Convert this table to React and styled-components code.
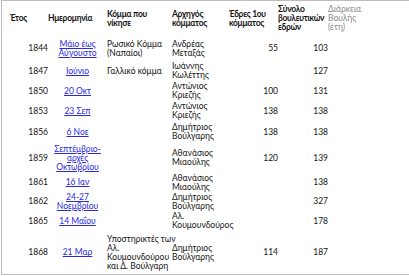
import React from "react";
import styled, { createGlobalStyle } from "styled-components";

const Global = createGlobalStyle`
  html, body { margin: 0; padding: 0; background: #fff; }
  body { font-family: Lato, "Noto Sans", sans-serif; color: #151515; }
`;

const Frame = styled.div`
  margin-left: 1px;
  width: 420px;
  border-top: 1px solid #bdbdbd;
  border-left: 1px solid #bdbdbd;
  border-bottom: 1px solid #bdbdbd;
  padding-left: 8px;
  box-sizing: border-box;
`;

const Table = styled.table`
  border-collapse: collapse;
  table-layout: fixed;
  width: 360px;
  font-size: 8.5px;
  line-height: 9px;
`;

const Col = styled.col`
  width: ${(p) => p.$w}px;
`;

const Row = styled.tr`
  height: ${(p) => p.$h}px;
`;

const Th = styled.th`
  padding: 0;
  text-align: left;
  vertical-align: middle;
  white-space: nowrap;
  letter-spacing: ${(p) => (p.$light ? "0" : "-0.3px")};
  font-weight: ${(p) => (p.$light ? 400 : 700)};
  color: ${(p) => (p.$light ? "#8a8a8a" : "#151515")};
`;

const Td = styled.td`
  padding: 0;
  vertical-align: middle;
  text-align: ${(p) => p.$align || "left"};
  white-space: nowrap;
`;

const Link = styled.a`
  color: #2a2adf;
  text-decoration: underline;
`;

const rows = [
  { h: 25, y: "1844", d: ["Μάιο έως", "Αύγουστο"], p: ["Ρωσικό Κόμμα", "(Ναπαίοι)"], l: ["Ανδρέας", "Μεταξάς"], s: "55", t: "103" },
  { h: 20, y: "1847", d: ["Ιούνιο"], p: ["Γαλλικό κόμμα"], l: ["Ιωάννης", "Κωλέττης"], s: "", t: "127" },
  { h: 20, y: "1850", d: ["20 Οκτ"], p: [], l: ["Αντώνιος", "Κριεζής"], s: "100", t: "131" },
  { h: 20, y: "1853", d: ["23 Σεπ"], p: [], l: ["Αντώνιος", "Κριεζής"], s: "138", t: "138" },
  { h: 22, y: "1856", d: ["6 Νοε"], p: [], l: ["Δημήτριος", "Βούλγαρης"], s: "138", t: "138" },
  { h: 30, y: "1859", d: ["Σεπτέμβριο-", "αρχές", "Οκτωβρίου"], p: [], l: ["Αθανάσιος", "Μιαούλης"], s: "120", t: "139" },
  { h: 19, y: "1861", d: ["16 Ιαν"], p: [], l: ["Αθανάσιος", "Μιαούλης"], s: "", t: "138" },
  { h: 19, y: "1862", d: ["24-27", "Νοεμβρίου"], p: [], l: ["Δημήτριος", "Βούλγαρης"], s: "", t: "327" },
  { h: 20, y: "1865", d: ["14 Μαΐου"], p: [], l: ["Αλ.", "Κουμουνδούρος"], s: "", t: "178" },
  { h: 43, y: "1868", d: ["21 Μαρ"], p: ["Υποστηρικτές των", "Αλ.", "Κουμουνδούρου", "και Δ. Βούλγαρη"], l: ["Δημήτριος", "Βούλγαρης"], s: "114", t: "187" },
];

const Lines = ({ items }) =>
  items.map((t, i) => (
    <React.Fragment key={i}>
      {i > 0 && <br />}
      {t}
    </React.Fragment>
  ));

export default function App() {
  return (
    <>
      <Global />
      <Frame>
        <Table>
          <colgroup>
            <Col $w={38} />
            <Col $w={59} />
            <Col $w={65} />
            <Col $w={57} />
            <Col $w={49} />
            <Col $w={50} />
            <Col $w={42} />
          </colgroup>
          <thead>
            <Row $h={35}>
              <Th>Έτος</Th>
              <Th>Ημερομηνία</Th>
              <Th>Κόμμα που<br />νίκησε</Th>
              <Th>Αρχηγός<br />κόμματος</Th>
              <Th>Έδρες 1ου<br />κόμματος</Th>
              <Th>Σύνολο<br />βουλευτικών<br />εδρών</Th>
              <Th $light>Διάρκεια<br />Βουλής<br />(έτη)</Th>
            </Row>
          </thead>
          <tbody>
            {rows.map((r) => (
              <Row key={r.y} $h={r.h}>
                <Td $align="right">{r.y}</Td>
                <Td $align="center">
                  <Link href="#"><Lines items={r.d} /></Link>
                </Td>
                <Td><Lines items={r.p} /></Td>
                <Td><Lines items={r.l} /></Td>
                <Td $align="right">{r.s}</Td>
                <Td $align="right">{r.t}</Td>
                <Td />
              </Row>
            ))}
          </tbody>
        </Table>
      </Frame>
    </>
  );
}
